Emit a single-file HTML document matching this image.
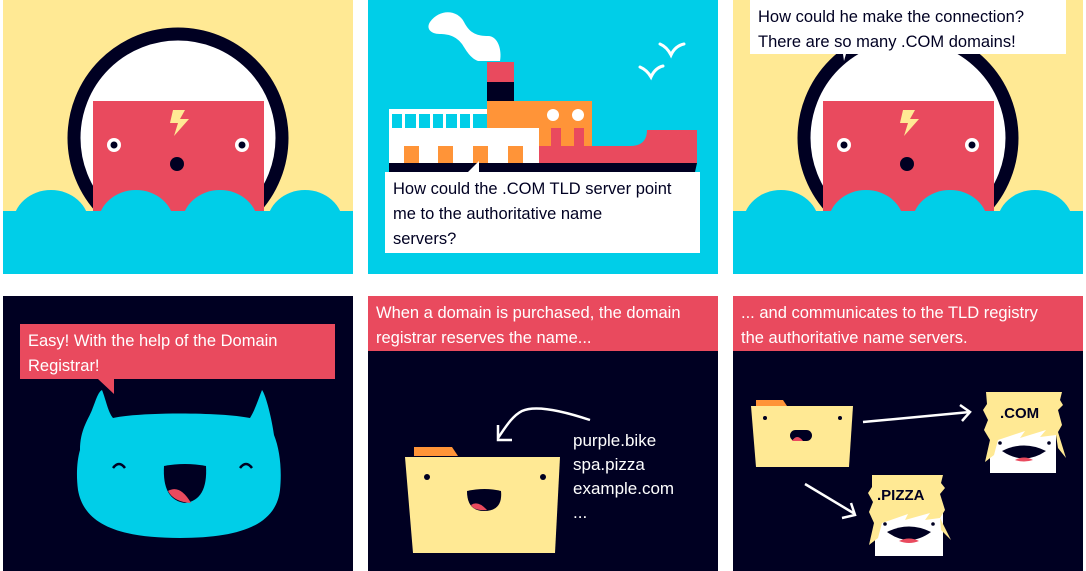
<!DOCTYPE html>
<html><head><meta charset="utf-8"><style>
html,body{margin:0;padding:0;background:#fff;width:1086px;height:571px;overflow:hidden}
svg{display:block}
text{font-family:"Liberation Sans",sans-serif}
.t{font-size:16.5px}
</style></head><body>
<svg width="1086" height="571" viewBox="0 0 1086 571" xmlns="http://www.w3.org/2000/svg">
<defs>
<clipPath id="c1"><rect x="3" y="0" width="350" height="274"/></clipPath>
<clipPath id="c3"><rect x="733" y="0" width="350" height="274"/></clipPath>
<g id="robot">
  <rect x="0" y="0" width="350" height="274" fill="#FFE994"/>
  <circle cx="175" cy="138" r="104" fill="#fff" stroke="#000022" stroke-width="13"/>
  <rect x="90" y="101" width="171" height="115" fill="#E94A5E"/>
  <path d="M170 110 L182 110 L177 119 L186 119 L171 136 L175 123 L167 123 Z" fill="#FFE994"/>
  <circle cx="111" cy="145" r="7" fill="#fff"/><circle cx="111" cy="145" r="3.5" fill="#000022"/>
  <circle cx="239" cy="145" r="7" fill="#fff"/><circle cx="239" cy="145" r="3.5" fill="#000022"/>
  <circle cx="174" cy="164" r="7" fill="#000022"/>
  <rect x="0" y="211" width="350" height="63" fill="#00CEE8"/>
  <ellipse cx="48" cy="224" rx="38" ry="34" fill="#00CEE8"/>
  <ellipse cx="133" cy="224" rx="38" ry="34" fill="#00CEE8"/>
  <ellipse cx="217" cy="224" rx="38" ry="34" fill="#00CEE8"/>
  <ellipse cx="302" cy="224" rx="38" ry="34" fill="#00CEE8"/>
</g>
</defs>
<g clip-path="url(#c1)"><use href="#robot" x="3" y="0"/></g>
<g clip-path="url(#c3)"><use href="#robot" x="733" y="0"/></g>
<!-- panel 3 bubble -->
<rect x="750" y="0" width="316" height="54" fill="#fff"/>
<path d="M843 54 L846 54 L844 61 Z" fill="#fff"/>
<text class="t" x="758" y="22" fill="#000022">How could he make the connection?</text>
<text class="t" x="758" y="47" fill="#000022">There are so many .COM domains!</text>

<!-- panel 2 -->
<rect x="368" y="0" width="350" height="274" fill="#00CEE8"/>
<path d="M430 22 C440 8 458 10 464 22 C470 34 478 36 488 36 C498 36 502 50 500 61 L478 61 C470 58 466 50 462 44 C456 36 448 34 440 34 C430 34 426 28 430 22 Z" fill="#fff"/>
<path d="M640 67 Q647 70 651 77 Q655 68 663 66" stroke="#fff" stroke-width="3" fill="none" stroke-linecap="round"/>
<path d="M660 44 Q667 47 671 55 Q675 46 684 44" stroke="#fff" stroke-width="3" fill="none" stroke-linecap="round"/>
<rect x="487" y="62" width="27" height="20" fill="#E94A5E"/>
<rect x="487" y="82" width="27" height="20" fill="#000022"/>
<rect x="487" y="101" width="105" height="46" fill="#FF9438"/>
<circle cx="553" cy="115" r="6" fill="#fff"/><circle cx="578" cy="115" r="6" fill="#fff"/>
<rect x="551" y="128" width="10" height="19" fill="#E94A5E"/><rect x="574" y="128" width="10" height="19" fill="#E94A5E"/>
<rect x="389" y="109" width="98" height="5" fill="#fff"/>
<g fill="#fff"><rect x="389" y="114" width="3" height="14"/><rect x="402" y="114" width="3" height="14"/><rect x="416" y="114" width="3" height="14"/><rect x="430" y="114" width="3" height="14"/><rect x="443" y="114" width="3" height="14"/><rect x="457" y="114" width="3" height="14"/><rect x="470" y="114" width="3" height="14"/></g>
<rect x="389" y="128" width="150" height="36" fill="#fff"/>
<g fill="#FF9438"><rect x="404" y="146" width="15" height="18"/><rect x="438" y="146" width="15" height="18"/><rect x="473" y="146" width="15" height="18"/><rect x="508" y="146" width="15" height="18"/></g>
<path d="M539 146 L630 146 Q647 146 647 130 L697 130 L697 164 L539 164 Z" fill="#E94A5E"/>
<path d="M389 163 L697 163 L695 172 L389 172 Z" fill="#000022"/>
<rect x="385" y="172" width="315" height="81" fill="#fff"/>
<path d="M468 172 L479 161 L479 172 Z" fill="#fff"/>
<text class="t" x="393" y="194" fill="#000022">How could the .COM TLD server point</text>
<text class="t" x="393" y="219" fill="#000022">me to the authoritative name</text>
<text class="t" x="393" y="244" fill="#000022">servers?</text>

<!-- panel 4 -->
<rect x="3" y="296" width="350" height="275" fill="#000022"/>
<path d="M80 450 C80 430 88 420 92 410 C96 400 98 392 102 390 C106 400 108 412 113 418 C140 412 220 412 250 418 C255 410 258 400 262 390 C266 395 272 420 274 435 C280 450 282 470 280 490 C276 525 240 538 180 538 C120 538 84 525 78 490 C76 475 77 460 80 450 Z" fill="#00CEE8"/>
<path d="M113 468 Q119 460 125 468" stroke="#000022" stroke-width="2.5" fill="none"/>
<path d="M240 468 Q246 460 252 468" stroke="#000022" stroke-width="2.5" fill="none"/>
<path d="M164 466 Q185 462 206 466 Q208 500 185 503 Q162 500 164 466 Z" fill="#000022"/>
<path d="M168 491 Q180 484 191 503 Q174 502 168 491 Z" fill="#E94A5E"/>
<rect x="20" y="324" width="315" height="55" fill="#E94A5E"/>
<path d="M98 379 L114 379 L114 394 Z" fill="#E94A5E"/>
<text class="t" x="28" y="346" fill="#fff">Easy! With the help of the Domain</text>
<text class="t" x="28" y="371" fill="#fff">Registrar!</text>

<!-- panel 5 -->
<rect x="368" y="296" width="350" height="275" fill="#000022"/>
<rect x="368" y="296" width="350" height="55" fill="#E94A5E"/>
<text class="t" x="376" y="318" fill="#fff">When a domain is purchased, the domain</text>
<text class="t" x="376" y="343" fill="#fff">registrar reserves the name...</text>
<path d="M414 447 L452 447 L458 456 L414 456 Z" fill="#FF9438"/>
<path d="M405 457 L560 457 L555 553 L413 553 Z" fill="#FFE994"/>
<circle cx="427" cy="477" r="3" fill="#000022"/><circle cx="543" cy="477" r="3" fill="#000022"/>
<path d="M467 491 Q485 487 501 491 Q503 511 484 511 Q467 511 467 491 Z" fill="#000022"/>
<path d="M471 505 Q478 500 487 510 Q474 511 471 505 Z" fill="#E94A5E"/>
<path d="M590 420 C560 410 535 405 522 411 C512 416 505 428 498 438" stroke="#fff" stroke-width="2.5" fill="none"/>
<path d="M498 425 L498 440 L512 440" stroke="#fff" stroke-width="2.5" fill="none"/>
<g font-size="17" fill="#fff"><text x="573" y="446">purple.bike</text><text x="573" y="470">spa.pizza</text><text x="573" y="494">example.com</text><text x="573" y="518">...</text></g>

<!-- panel 6 -->
<rect x="733" y="296" width="350" height="275" fill="#000022"/>
<rect x="733" y="296" width="350" height="55" fill="#E94A5E"/>
<text class="t" x="741" y="318" fill="#fff">... and communicates to the TLD registry</text>
<text class="t" x="741" y="343" fill="#fff">the authoritative name servers.</text>
<path d="M756 400 L783 400 L787 406 L756 406 Z" fill="#FF9438"/>
<path d="M751 406 L853 406 L849 467 L756 467 Z" fill="#FFE994"/>
<circle cx="765" cy="418" r="2" fill="#000022"/><circle cx="840" cy="418" r="2" fill="#000022"/>
<rect x="790" y="430" width="22" height="11" rx="5.5" fill="#000022"/>
<path d="M792 441 Q797 433 803 441 Z" fill="#E94A5E"/>
<path d="M863 422 L970 412" stroke="#fff" stroke-width="2.5"/>
<path d="M960 405 L970 412 L962 421" stroke="#fff" stroke-width="2.5" fill="none"/>
<path d="M805 484 L855 514" stroke="#fff" stroke-width="2.5"/>
<path d="M842 518 L855 515 L851 503" stroke="#fff" stroke-width="2.5" fill="none"/>
<!-- .COM box -->
<rect x="990" y="430" width="66" height="43" fill="#fff"/>
<path d="M986 392 L1062 392 L1060 400 L1063 405 L1058 410 L1062 425 L1058 432 L1066 458 L1058 448 L1056 435 L1040 437 L1046 430 L1020 438 L1025 431 L998 440 L994 455 L985 462 L990 440 L984 430 L988 420 L983 410 L987 404 Z" fill="#FFE994"/>
<text x="1000" y="418" font-size="15" font-weight="bold" fill="#000022">.COM</text>
<circle cx="1000" cy="443" r="1.8" fill="#000022"/><circle cx="1049" cy="443" r="1.8" fill="#000022"/>
<path d="M1002 451 Q1024 440 1046 451 Q1024 466 1002 451 Z" fill="#000022"/>
<path d="M1015 460 Q1024 455 1033 460 Q1024 463 1015 460 Z" fill="#E94A5E"/>
<!-- .PIZZA box -->
<rect x="875" y="513" width="68" height="43" fill="#fff"/>
<path d="M872 475 L943 475 L941 483 L945 488 L940 494 L945 510 L940 518 L951 540 L941 530 L940 518 L925 520 L930 513 L905 520 L908 514 L882 523 L878 538 L869 545 L874 523 L869 512 L873 502 L868 493 L872 487 Z" fill="#FFE994"/>
<text x="877" y="500" font-size="15" font-weight="bold" fill="#000022">.PIZZA</text>
<circle cx="885" cy="524" r="1.8" fill="#000022"/><circle cx="933" cy="524" r="1.8" fill="#000022"/>
<path d="M887 532 Q909 521 931 532 Q909 548 887 532 Z" fill="#000022"/>
<path d="M899 541 Q909 536 919 541 Q909 545 899 541 Z" fill="#E94A5E"/>
</svg>
</body></html>
